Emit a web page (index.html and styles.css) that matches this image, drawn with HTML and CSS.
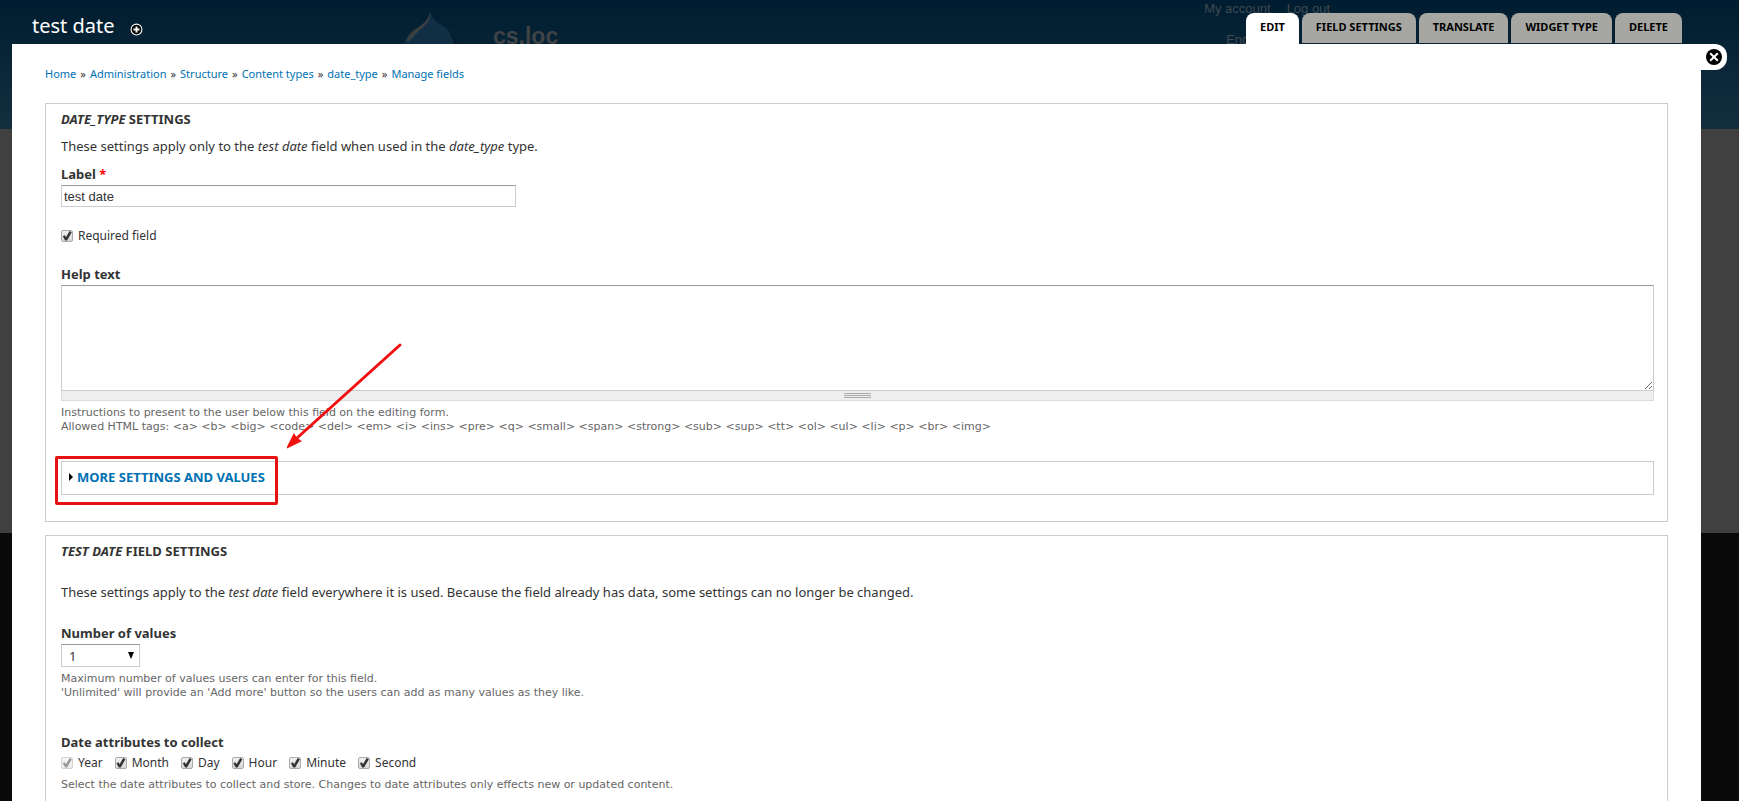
FILE: index.html
```
<!DOCTYPE html>
<html lang="en">
<head>
    <meta charset="UTF-8">
    <meta name="viewport" content="width=device-width, initial-scale=1.0">
    <title>test date</title>
    <link rel="stylesheet" href="styles.css">
</head>
<body>
    <!-- Site behind the overlay -->
    <div class="site">
        <div class="site-header">
            <svg class="site-logo" viewBox="0 0 58 66" width="58" height="66" aria-hidden="true">
                <path d="M28 0C29 10 38 13 46 20C54 27 58 35 57 43C56 56 44 66 29 66C13 66 1 55 1 41C1 30 7 23 15 18C23 13 27 9 28 0Z" fill="#112f44"/>
                <path d="M46 20C54 27 58 35 57 43C57 50 54 56 50 60C54 45 54 32 46 20Z" fill="#061c2c"/>
                <path d="M28 1C28 9 27 13 20 18C15 22 12 27 7 31C4 33 4 30 7 26C11 19 17 18 22 13C26 9 27 6 28 1Z" fill="#3c3f40"/>
            </svg>
            <a href="#" class="site-name">cs.loc</a>
            <div class="site-menu">
                <div class="user-menu"><a href="#">My account</a><a href="#">Log out</a></div>
                <a href="#" class="language">English</a>
            </div>
        </div>
        <div class="site-content"></div>
    </div>

    <div class="overlay">
        <div class="overlay-header">
            <h1 class="overlay-title">test date</h1>
            <button type="button" class="shortcut" aria-label="Add to shortcuts">
                <svg viewBox="0 0 12 12" width="13" height="13">
                    <circle cx="6" cy="6" r="5" fill="#000" stroke="#fff" stroke-width="1"/>
                    <path d="M6 3.2V8.8M3.2 6H8.8" stroke="#fff" stroke-width="1.8"/>
                </svg>
            </button>
            <nav class="tabs">
                <a href="#" class="tab active">Edit</a>
                <a href="#" class="tab">Field settings</a>
                <a href="#" class="tab">Translate</a>
                <a href="#" class="tab">Widget type</a>
                <a href="#" class="tab">Delete</a>
            </nav>
        </div>

        <main class="panel">
            <button type="button" class="close" aria-label="Close overlay">
                <svg viewBox="0 0 16 16" width="16" height="16">
                    <circle cx="8" cy="8" r="8" fill="#000"/>
                    <path d="M4.2 4.2L11.8 11.8M11.8 4.2L4.2 11.8" stroke="#fff" stroke-width="2"/>
                </svg>
            </button>

            <nav class="breadcrumb">
                <a href="#">Home</a>
                <span>»</span>
                <a href="#">Administration</a>
                <span>»</span>
                <a href="#">Structure</a>
                <span>»</span>
                <a href="#">Content types</a>
                <span>»</span>
                <a href="#">date_type</a>
                <span>»</span>
                <a href="#">Manage fields</a>
            </nav>

            <form>
                <section class="fieldset">
                    <h2 class="legend"><em>date_type</em> settings</h2>
                    <p class="intro">These settings apply only to the <em>test date</em> field when used in the <em>date_type</em> type.</p>

                    <div class="form-item">
                        <label for="label" class="title">Label <span class="required">*</span></label>
                        <input type="text" id="label" class="text-input" value="test date">
                    </div>

                    <div class="form-item required-item">
                        <label class="check"><input type="checkbox" checked>Required field</label>
                    </div>

                    <div class="form-item">
                        <label for="help" class="title">Help text</label>
                        <textarea id="help" class="help-input"></textarea>
                        <div class="grippie"><span></span></div>
                        <p class="description">Instructions to present to the user below this field on the editing form.<br>
                        Allowed HTML tags: &lt;a&gt; &lt;b&gt; &lt;big&gt; &lt;code&gt; &lt;del&gt; &lt;em&gt; &lt;i&gt; &lt;ins&gt; &lt;pre&gt; &lt;q&gt; &lt;small&gt; &lt;span&gt; &lt;strong&gt; &lt;sub&gt; &lt;sup&gt; &lt;tt&gt; &lt;ol&gt; &lt;ul&gt; &lt;li&gt; &lt;p&gt; &lt;br&gt; &lt;img&gt;</p>
                    </div>

                    <div class="collapsed">
                        <a href="#" class="collapsed-title">More settings and values</a>
                        <!-- Red marker and arrow -->
                        <div class="marker"></div>
                        <svg class="arrow" viewBox="0 0 116 108" width="116" height="108" aria-hidden="true">
                            <path d="M113 3L10 96" stroke="#f01010" stroke-width="3" stroke-linecap="round"/>
                            <path d="M1 105L7 93L9 96L13 99Z" fill="#f01010" stroke="#f01010" stroke-width="2"/>
                        </svg>
                    </div>
                </section>

                <section class="fieldset">
                    <h2 class="legend"><em>test date</em> field settings</h2>
                    <p class="intro spaced">These settings apply to the <em>test date</em> field everywhere it is used. Because the field already has data, some settings can no longer be changed.</p>

                    <div class="form-item number-item">
                        <label for="number" class="title">Number of values</label>
                        <div class="select-wrap">
                            <select id="number" class="number">
                                <option>1</option>
                                <option>2</option>
                                <option>Unlimited</option>
                            </select>
                        </div>
                        <p class="description">Maximum number of values users can enter for this field.<br>
                        'Unlimited' will provide an 'Add more' button so the users can add as many values as they like.</p>
                    </div>

                    <div class="form-item" role="group" aria-labelledby="attributes">
                        <div class="title" id="attributes">Date attributes to collect</div>
                        <div class="checks">
                            <label class="check"><input type="checkbox" checked disabled>Year</label>
                            <label class="check"><input type="checkbox" checked>Month</label>
                            <label class="check"><input type="checkbox" checked>Day</label>
                            <label class="check"><input type="checkbox" checked>Hour</label>
                            <label class="check"><input type="checkbox" checked>Minute</label>
                            <label class="check"><input type="checkbox" checked>Second</label>
                        </div>
                        <p class="description">Select the date attributes to collect and store. Changes to date attributes only effects new or updated content.</p>
                    </div>
                </section>
            </form>
        </main>
    </div>
</body>
</html>
```

FILE: styles.css
```
* {
    box-sizing: border-box;
}

body {
    margin: 0;
    height: 100vh;
    overflow: hidden;
    background: #0a0a0a;
    color: #333;
    font-family: "Noto Sans", "Lucida Grande", Verdana, sans-serif;
    font-size: 13px;
    line-height: 20px;
}

a {
    color: #0071b3;
    text-decoration: none;
}

p,
h1,
h2 {
    margin: 0;
}

/* Dimmed site */
.site {
    position: absolute;
    top: 0;
    left: 0;
    width: 100%;
    font-family: "Liberation Sans", Arial, sans-serif;
}

.site-header {
    display: flex;
    height: 129px;
    padding: 0 409px 0 402px;
    background: linear-gradient(#001c30, #132f3f);
}

.site-logo {
    margin-top: 10px;
}

.site-name {
    margin: 22px 0 0 33px;
    color: #3f4346;
    font-size: 23px;
    font-weight: bold;
    line-height: 28px;
}

.site-menu {
    margin-left: auto;
    line-height: 18px;
}

.site-menu a {
    color: #3f4a52;
}

.user-menu {
    display: flex;
    gap: 16px;
}

.language {
    display: block;
    margin: 13px 0 0 22px;
}

.site-content {
    height: 404px;
    background: #404040;
}

/* Overlay */
.overlay {
    position: relative;
    height: 100%;
    display: flex;
    flex-direction: column;
    padding: 0 38px 0 12px;
}

.overlay-header {
    display: flex;
    height: 44px;
    padding: 13px 19px 0 20px;
}

.overlay-title {
    color: #fff;
    font-size: 20px;
    font-weight: normal;
    line-height: 26px;
}

.shortcut {
    align-self: flex-start;
    display: flex;
    margin: 10px 0 0 15px;
    padding: 0;
    border: 0;
    background: none;
}

.tabs {
    display: flex;
    gap: 3px;
    margin-left: auto;
}

.tab {
    height: 30px;
    padding: 4px 14px;
    border-radius: 8px 8px 0 0;
    background: #a6a7a2;
    color: #000;
    font-size: 11px;
    font-weight: bold;
    text-transform: uppercase;
}

.tab.active {
    height: 31px;
    background: #fff;
}

.panel {
    position: relative;
    flex: 1;
    padding: 20px 33px 0;
    background: #fff;
}

.close {
    position: absolute;
    top: 0;
    left: 100%;
    display: flex;
    padding: 5px;
    border: 0;
    border-radius: 0 12px 12px 0;
    background: #fff;
}

.breadcrumb {
    display: flex;
    gap: 4px;
    margin-bottom: 19px;
    font-size: 11px;
}

.fieldset {
    margin-bottom: 13px;
    padding: 5px 13px 26px 15px;
    border: 1px solid #ccc;
}

.legend {
    font-size: 13px;
    font-weight: bold;
    text-transform: uppercase;
}

.intro {
    margin: 7px 0 8px;
}

.intro.spaced {
    margin: 21px 0;
}

.title {
    display: block;
    font-weight: bold;
    line-height: 21px;
}

.required {
    color: #f00;
}

.text-input {
    display: block;
    width: 455px;
    height: 22px;
    padding: 2px;
    border: 1px solid #ccc;
    border-top-color: #999;
    color: #333;
    font-family: "Liberation Sans", Arial, sans-serif;
    font-size: 13px;
}

.required-item {
    margin: 19px 0 18px;
}

.check {
    display: flex;
    align-items: center;
    gap: 5px;
    font-size: 12px;
}

.check input {
    appearance: none;
    width: 12px;
    height: 12px;
    margin: 0;
    border: 1px solid #aaa;
    border-radius: 2px;
    background: linear-gradient(#f0f0f0, #d8d8d8);
}

.check input::before {
    content: "";
    display: block;
    width: 10px;
    height: 10px;
    background: #333;
    clip-path: polygon(8% 52%, 28% 42%, 40% 62%, 76% 0, 98% 12%, 50% 96%, 32% 96%);
}

.check input:disabled {
    opacity: 0.5;
}

.help-input {
    display: block;
    width: 100%;
    height: 106px;
    border: 1px solid #ccc;
    border-top-color: #999;
}

.grippie {
    display: flex;
    justify-content: center;
    height: 10px;
    padding-top: 2px;
    border: 1px solid #ddd;
    border-top: 0;
    background: #eee;
}

.grippie span {
    width: 27px;
    height: 5px;
    background: repeating-linear-gradient(#aaa 0 1px, #eee 1px 2px);
}

.description {
    padding-top: 5px;
    color: #666;
    font-family: "DejaVu Sans", Verdana, sans-serif;
    font-size: 11px;
    line-height: 14px;
}

.collapsed {
    position: relative;
    margin-top: 27px;
    padding: 5px 7px 7px;
    border: 1px solid #ccc;
}

.collapsed-title {
    display: flex;
    align-items: center;
    gap: 4px;
    font-weight: bold;
    text-transform: uppercase;
}

.collapsed-title::before {
    content: "";
    border-left: 4px solid #000;
    border-top: 4px solid transparent;
    border-bottom: 4px solid transparent;
}

.marker {
    position: absolute;
    top: -6px;
    left: -7px;
    width: 223px;
    height: 49px;
    border: 3px solid #e81010;
    border-radius: 2px;
}

.arrow {
    position: absolute;
    top: -120px;
    left: 225px;
}

.number-item {
    margin-bottom: 32px;
}

.select-wrap {
    position: relative;
    width: 79px;
}

.select-wrap::after {
    content: "";
    position: absolute;
    top: 8px;
    right: 6px;
    border-top: 7px solid #000;
    border-left: 3px solid transparent;
    border-right: 3px solid transparent;
    pointer-events: none;
}

.number {
    appearance: none;
    display: block;
    width: 100%;
    height: 23px;
    padding: 0 7px;
    border: 1px solid #ccc;
    border-top-color: #999;
    border-radius: 0;
    background: #fff;
    color: #333;
    font-family: inherit;
    font-size: 13px;
}

.checks {
    display: flex;
    gap: 12px;
}
```
